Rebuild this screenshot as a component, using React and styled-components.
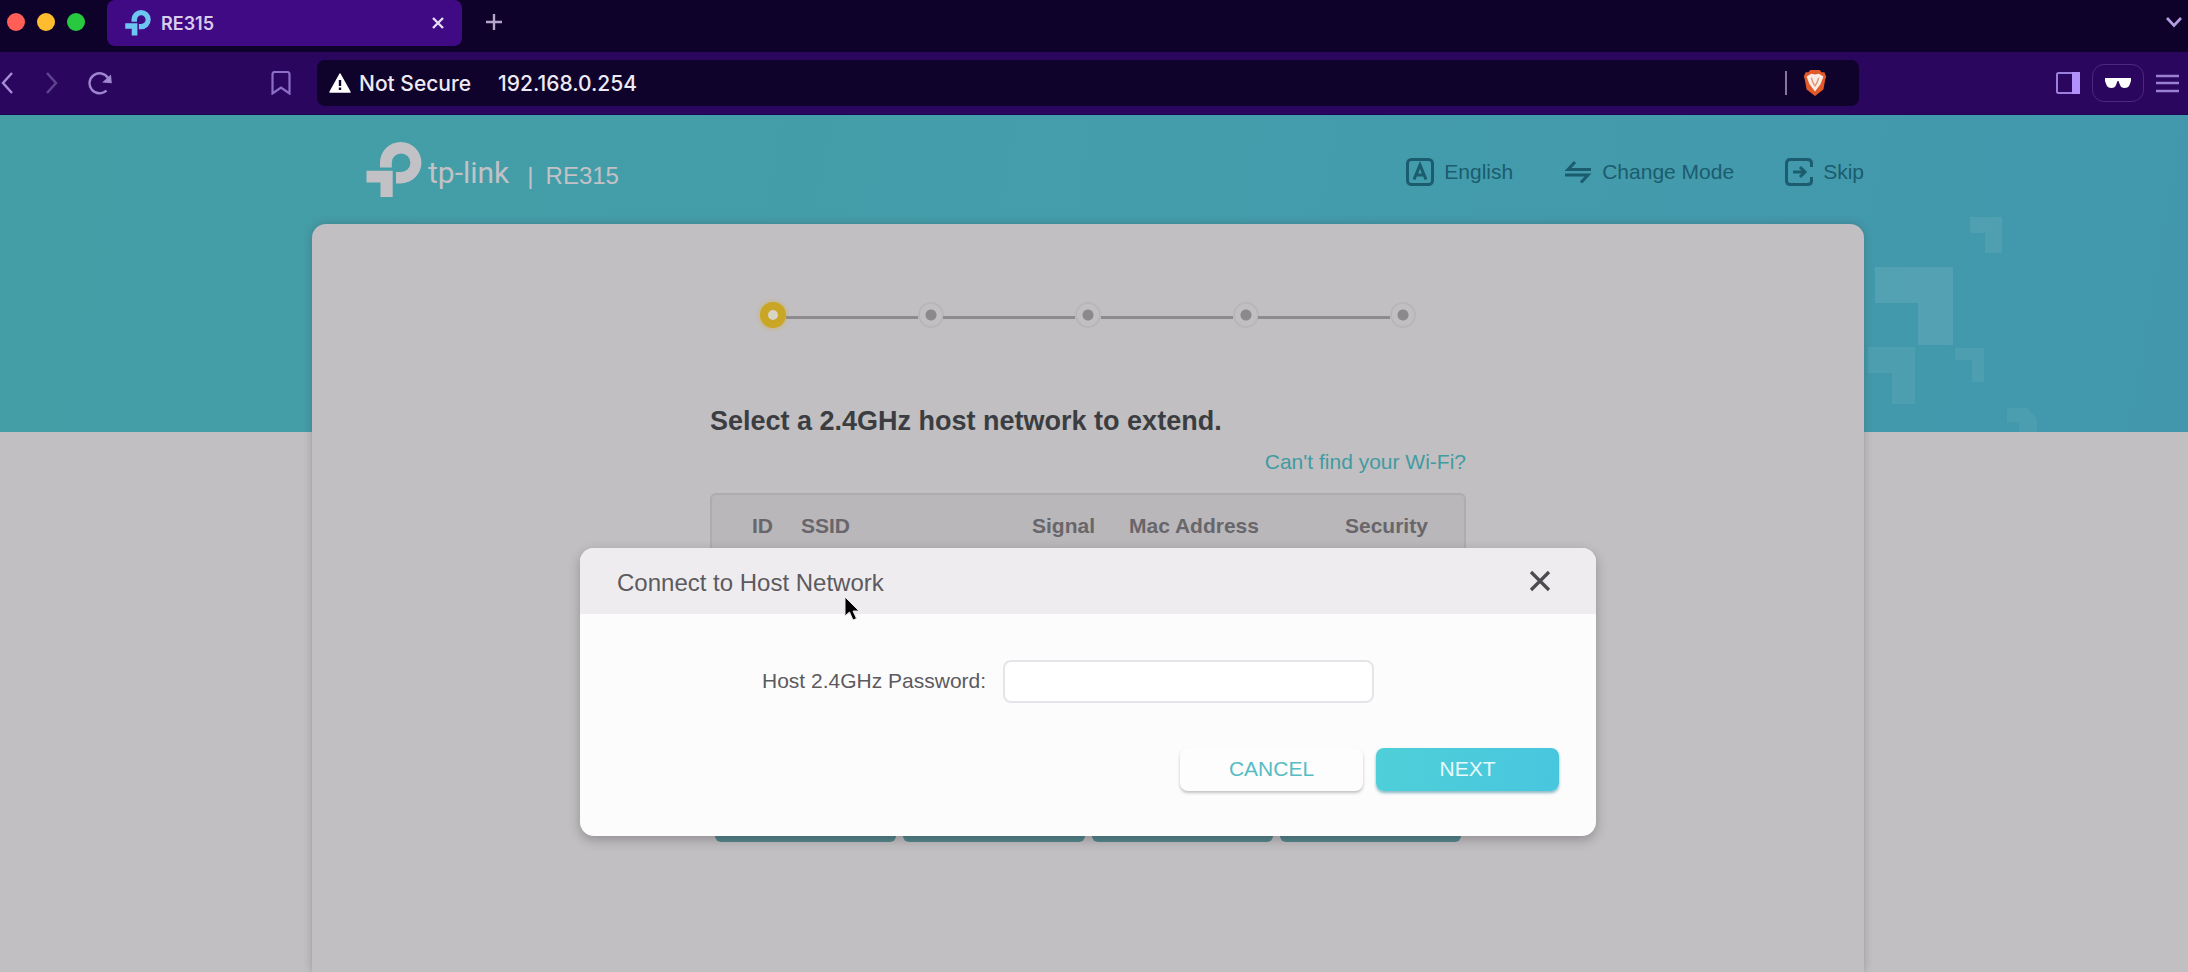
// lib
import styled, { createGlobalStyle } from "styled-components";

const steps = [1, 2, 3, 4, 5];
const actions = ["a", "b", "c", "d"];

function TpLogo({ size, color }) {
  return (
    <svg width={size} height={size} viewBox="0 0 56 56" fill={color}>
      <path d="M14 25.500V20.700A20.700 20.700 0 1 1 34.700 41.400H30V30H34.700A9.300 9.300 0 1 0 25.800 20.700V25.500Z" />
      <path d="M0.500 28.700H26.700V55H14.500V40.500H0.500Z" />
    </svg>
  );
}

function TabBar() {
  return (
    <Tabs>
      <Lights>
        <Light $color="#ff5f57" />
        <Light $color="#febc2e" />
        <Light $color="#28c840" />
      </Lights>
      <Tab>
        <TpLogo size={26} color="#6cc6f0" />
        <TabTitle>RE315</TabTitle>
        <IconButton aria-label="Close tab">
          <svg width="12" height="12" viewBox="0 0 12 12" stroke="#e6dcf5" strokeWidth="2.4">
            <path d="M1 1L11 11M11 1L1 11" />
          </svg>
        </IconButton>
      </Tab>
      <IconButton aria-label="New tab">
        <svg width="16" height="16" viewBox="0 0 16 16" stroke="#b3a6c9" strokeWidth="2.4">
          <path d="M8 0V16M0 8H16" />
        </svg>
      </IconButton>
      <Spacer />
      <IconButton aria-label="Search tabs">
        <svg width="16" height="12" viewBox="0 0 16 12" fill="none" stroke="#b69ce0" strokeWidth="2.6">
          <path d="M1 2L8 9.500L15 2" />
        </svg>
      </IconButton>
    </Tabs>
  );
}

function Toolbar() {
  return (
    <Bar>
      <BarSide>
        <IconButton aria-label="Back">
          <svg width="14" height="22" viewBox="0 0 14 22" fill="none" stroke="#a68fd6" strokeWidth="2.4">
            <path d="M12 1L3 11L12 21" />
          </svg>
        </IconButton>
        <IconButton aria-label="Forward">
          <svg width="14" height="22" viewBox="0 0 14 22" fill="none" stroke="#5f4590" strokeWidth="2.4">
            <path d="M3 1L12 11L3 21" />
          </svg>
        </IconButton>
        <IconButton aria-label="Reload">
          <svg width="24" height="24" viewBox="0 0 24 24" fill="none" stroke="#9d85cf" strokeWidth="2.4">
            <path d="M18.500 19.500A10 10 0 1 1 20 7" />
            <path d="M17 10.500L22.500 11L22 6Z" fill="#b49be4" />
          </svg>
        </IconButton>
      </BarSide>
      <IconButton aria-label="Bookmark">
        <svg width="20" height="24" viewBox="0 0 20 24" fill="none" stroke="#8b6fc6" strokeWidth="2.2">
          <path d="M4 1H16Q18.500 1 18.500 3.500V22.500L10 16.500L1.500 22.500V3.500Q1.500 1 4 1Z" />
        </svg>
      </IconButton>
      <AddressBar>
        <svg width="22" height="20" viewBox="0 0 22 20">
          <path d="M11 1L21 19H1Z" fill="#fff" stroke="#fff" strokeWidth="1.5" strokeLinejoin="round" />
          <path d="M11 7V13M11 14.500V17" stroke="#12032c" strokeWidth="2.4" />
        </svg>
        <BarText>Not Secure</BarText>
        <Url aria-label="Address" defaultValue="192.168.0.254" />
        <Divider />
        <IconButton aria-label="Shields">
          <svg width="26" height="28" viewBox="0 0 26 30">
            <path
              d="M8 1H18L20 3.500L23 3.500L25 8L24 11L22 22L13 29L4 22L2 11L1 8L3 3.500L6 3.500Z"
              fill="#e2592a"
            />
            <path d="M4 8L9 5L13 6L17 5L22 8L19 16L13 24L7 16Z" fill="#f9ece6" />
            <path d="M9 9.500L11 15L13 18L15 15L17 9.500" fill="none" stroke="#df9a78" strokeWidth="1.6" />
          </svg>
        </IconButton>
      </AddressBar>
      <Spacer />
      <BarTools>
        <IconButton aria-label="Sidebar">
          <svg width="24" height="22" viewBox="0 0 24 22">
            <rect x="1" y="1" width="22" height="20" rx="1.5" fill="none" stroke="#9a7fdc" strokeWidth="2" />
            <path d="M16 0H24V22H16Z" fill="#b290fa" />
          </svg>
        </IconButton>
        <PrivateButton aria-label="Private window">
          <svg width="26" height="10" viewBox="0 0 26 10" fill="#fff">
            <path d="M0 0H26V3L24.500 7Q23.500 10 19.500 10Q16 10 15 7L13.500 3H12.500L11 7Q10 10 6.500 10Q2.500 10 1.500 7L0 3Z" />
          </svg>
        </PrivateButton>
        <IconButton aria-label="Menu">
          <svg width="23" height="20" viewBox="0 0 23 20" stroke="#9a80d0" strokeWidth="2.4">
            <path d="M0 3H23M0 10H23M0 18H23" />
          </svg>
        </IconButton>
      </BarTools>
    </Bar>
  );
}

function Header() {
  return (
    <Head>
      <Brand>
        <TpLogo size={56} color="#c2c1c6" />
        <LogoText>tp-link</LogoText>
        <Model>|</Model>
        <Model>RE315</Model>
      </Brand>
      <Nav>
        <NavLink href="#">
          <svg width="28" height="28" viewBox="0 0 28 28" fill="none" stroke="currentColor" strokeWidth="3">
            <rect x="1.5" y="1.5" width="25" height="25" rx="4" />
            <path d="M8 21.500L14 7L20 21.500M10 17H18" />
          </svg>
          English
        </NavLink>
        <NavLink href="#">
          <svg width="28" height="24" viewBox="0 0 28 24" fill="none" stroke="currentColor" strokeWidth="3">
            <path d="M11 2L4 9.500H27M1 15H24L17 22.500" />
          </svg>
          Change Mode
        </NavLink>
        <NavLink href="#">
          <svg width="28" height="28" viewBox="0 0 28 28" fill="none" stroke="currentColor" strokeWidth="3">
            <path d="M26.500 9V5.500Q26.500 1.500 22.500 1.500H5.500Q1.500 1.500 1.500 5.500V22.500Q1.500 26.500 5.500 26.500H22.500Q26.500 26.500 26.500 22.500V19" />
            <path d="M8 14H20M15 9L20 14L15 19" />
          </svg>
          Skip
        </NavLink>
      </Nav>
    </Head>
  );
}

function ConnectDialog() {
  return (
    <Dialog role="dialog" aria-labelledby="dialog-title">
      <DialogHead>
        <DialogTitle id="dialog-title">Connect to Host Network</DialogTitle>
        <IconButton aria-label="Close">
          <svg width="22" height="22" viewBox="0 0 22 22" stroke="#4d4b50" strokeWidth="3.2">
            <path d="M2 2L20 20M20 2L2 20" />
          </svg>
        </IconButton>
      </DialogHead>
      <Field>
        <Label htmlFor="password">Host 2.4GHz Password:</Label>
        <PasswordInput id="password" type="password" />
      </Field>
      <DialogActions>
        <DialogBtn>CANCEL</DialogBtn>
        <DialogBtn $primary>NEXT</DialogBtn>
      </DialogActions>
      <Pointer width="18" height="26" viewBox="0 0 18 26">
        <path
          d="M1 1V20L5.500 16L9 24L12.500 22.500L9 15H15Z"
          fill="#000"
          stroke="#e8e6ea"
          strokeWidth="1"
        />
      </Pointer>
    </Dialog>
  );
}

export default function App() {
  return (
    <Window>
      <GlobalStyle />
      <TabBar />
      <Toolbar />
      <Page>
        <Squares width="180" height="220" viewBox="0 0 180 220" fill="#fff">
          <path d="M11 55H89V133H54V91H11Z" opacity=".09" />
          <path d="M106 5H138V41H121V21H106Z" opacity=".07" />
          <path d="M4 135H51V192H28V161H4Z" opacity=".06" />
          <path d="M91 136H120V170H108V148H91Z" opacity=".06" />
          <path d="M143 196H163L173 206V220H155V210H143Z" opacity=".05" />
        </Squares>
        <Header />
        <Card>
          <Steps>
            {steps.map((step) => (
              <Step key={step} $active={step === 1} />
            ))}
          </Steps>
          <Content>
            <Title>Select a 2.4GHz host network to extend.</Title>
            <HelpLink href="#">Can't find your Wi-Fi?</HelpLink>
            <TableBox>
              <Table>
                <thead>
                  <tr>
                    <Th $width="49px">ID</Th>
                    <Th $width="231px">SSID</Th>
                    <Th $width="97px">Signal</Th>
                    <Th $width="216px">Mac Address</Th>
                    <Th>Security</Th>
                  </tr>
                </thead>
              </Table>
            </TableBox>
            <PageActions>
              {actions.map((action) => (
                <PageBtn key={action} />
              ))}
            </PageActions>
          </Content>
        </Card>
        <Overlay>
          <ConnectDialog />
        </Overlay>
      </Page>
    </Window>
  );
}

const GlobalStyle = createGlobalStyle`
  * {
    box-sizing: border-box;
  }
  body {
    margin: 0;
    font-family: "Liberation Sans", Arial, sans-serif;
  }
  button {
    padding: 0;
    border: none;
    background: none;
    font-family: inherit;
    cursor: pointer;
  }
  svg {
    display: block;
    flex-shrink: 0;
  }
`;

const Window = styled.div`
  display: flex;
  flex-direction: column;
  height: 100vh;
  overflow: hidden;
`;

const IconButton = styled.button`
  display: flex;
  align-items: center;
  flex-shrink: 0;
`;

const Spacer = styled.div`
  flex: 1;
`;

const Tabs = styled.div`
  display: flex;
  align-items: flex-start;
  height: 52px;
  padding-right: 6px;
  background: #0e022a;

  & > button {
    height: 44px;
  }
`;

const Lights = styled.div`
  display: flex;
  align-items: center;
  gap: 12px;
  height: 44px;
  padding: 0 22px 0 7px;
`;

const Light = styled.span`
  width: 18px;
  height: 18px;
  border-radius: 50%;
  background: ${(props) => props.$color};
`;

const Tab = styled.div`
  display: flex;
  align-items: center;
  width: 355px;
  height: 46px;
  padding: 0 18px;
  margin-right: 24px;
  border-radius: 8px;
  background: #400a84;
`;

const TabTitle = styled.span`
  flex: 1;
  padding-left: 10px;
  font-family: Inter, sans-serif;
  font-size: 18px;
  font-weight: 600;
  color: #d9cdec;
`;

const Bar = styled.div`
  display: flex;
  align-items: center;
  height: 63px;
  padding-right: 9px;
  background: #2b065f;
  border-bottom: 1px solid #1c0754;
`;

const BarSide = styled.div`
  display: flex;
  align-items: center;
  gap: 30px;
  width: 271px;
`;

const AddressBar = styled.div`
  display: flex;
  align-items: center;
  flex: 0 1 1542px;
  height: 46px;
  padding: 0 31px 0 12px;
  margin-left: 26px;
  border-radius: 8px;
  background: #0f022b;
`;

const BarText = styled.span`
  padding: 0 27px 0 8px;
  font-family: Inter, sans-serif;
  font-size: 21px;
  font-weight: 500;
  color: #eeeaf5;
`;

const Url = styled.input`
  flex: 1;
  min-width: 0;
  padding: 0;
  border: none;
  outline: none;
  background: none;
  font-family: Inter, sans-serif;
  font-size: 21px;
  font-weight: 500;
  color: #eeeaf5;
`;

const Divider = styled.span`
  width: 2px;
  height: 24px;
  margin-right: 15px;
  background: #84769f;
`;

const BarTools = styled.div`
  display: flex;
  align-items: center;
  gap: 12px;
`;

const PrivateButton = styled.button`
  display: flex;
  align-items: center;
  justify-content: center;
  width: 52px;
  height: 38px;
  && {
    border: 1px solid #4a2a7c;
  }
  border-radius: 12px;
`;

const Page = styled.div`
  position: relative;
  display: flex;
  flex-direction: column;
  align-items: center;
  flex: 1;
  padding: 0 12px 0 0;
  background: linear-gradient(100deg, #449ea6, #439dab 55%, #4297ac) no-repeat top / 100% 317px #c1bfc2;
`;

const Squares = styled.svg`
  position: absolute;
  top: 97px;
  left: calc(50% + 770px);
`;

const Head = styled.header`
  display: flex;
  align-items: center;
  justify-content: space-between;
  width: 100%;
  max-width: 1552px;
  height: 109px;
  padding-left: 54px;
`;

const Brand = styled.div`
  display: flex;
  align-items: center;
  color: #c2c1c6;
`;

const LogoText = styled.span`
  padding: 6px 18px 0 6px;
  font-family: Roboto, sans-serif;
  font-size: 30px;
  line-height: 32px;
`;

const Model = styled.span`
  padding-top: 12px;
  margin-right: 12px;
  font-size: 24px;
  line-height: 24px;
`;

const Nav = styled.nav`
  display: flex;
  align-items: center;
  gap: 51px;
  padding-top: 4px;
`;

const NavLink = styled.a`
  display: flex;
  align-items: center;
  gap: 10px;
  font-size: 21px;
  color: #1b5c6e;
  text-decoration: none;
`;

const Card = styled.main`
  flex: 1;
  width: 100%;
  max-width: 1552px;
  padding-top: 78px;
  border-radius: 14px 14px 0 0;
  background: #c1bfc2;
  box-shadow: 0 0 8px rgba(60, 60, 70, 0.3);
`;

const Steps = styled.ol`
  display: flex;
  justify-content: space-between;
  width: 656px;
  padding: 0;
  margin: 0 auto;
  list-style: none;
`;

const Step = styled.li`
  position: relative;
  width: 26px;
  height: 26px;
  border: ${(props) => (props.$active ? "8px solid #c9a626" : "2px solid #b8b6b9")};
  border-radius: 50%;
  background: ${(props) =>
    props.$active ? "#d8d4c6" : "radial-gradient(circle, #8b898c 5px, transparent 6px)"};
  box-shadow: ${(props) => (props.$active ? "0 0 5px #cfb45a" : "none")};

  /* connector to the previous step */
  &:not(:first-child)::before {
    content: "";
    position: absolute;
    top: 12px;
    right: 24px;
    width: 132px;
    height: 3px;
    background: #8d8b8e;
  }
`;

const Content = styled.section`
  display: flex;
  flex-direction: column;
  width: 756px;
  margin: 78px auto 0;
`;

const Title = styled.h1`
  margin: 0;
  font-size: 27px;
  line-height: 30px;
  color: #3b3d41;
`;

const HelpLink = styled.a`
  align-self: flex-end;
  margin-top: 14px;
  font-size: 21px;
  line-height: 24px;
  color: #429ba0;
  text-decoration: none;
`;

const TableBox = styled.div`
  height: 290px;
  margin-top: 19px;
  padding-left: 40px;
  border: 2px solid #aeacaf;
  border-radius: 6px;
  background: #b9b7ba;
`;

const Table = styled.table`
  width: 100%;
  table-layout: fixed;
  border-collapse: collapse;
`;

const Th = styled.th`
  width: ${(props) => props.$width || "auto"};
  height: 62px;
  padding: 0;
  font-size: 21px;
  text-align: left;
  color: #68666a;
`;

const PageActions = styled.div`
  display: flex;
  gap: 7px;
  padding: 0 5px;
  margin-top: 16px;
`;

const PageBtn = styled.button`
  flex: 1;
  height: 43px;
  && {
    background: #57888f;
  }
  border-radius: 6px;
`;

const Overlay = styled.div`
  position: absolute;
  top: 433px;
  left: 0;
  right: 12px;
  display: flex;
  justify-content: center;
`;

const Dialog = styled.div`
  position: relative;
  width: 1016px;
  height: 288px;
  border-radius: 14px;
  background: #fcfcfc;
  box-shadow: 0 4px 12px rgba(0, 0, 0, 0.25);
`;

const DialogHead = styled.div`
  display: flex;
  align-items: center;
  justify-content: space-between;
  height: 66px;
  padding: 0 45px 0 37px;
  border-radius: 14px 14px 0 0;
  background: #eeecef;
`;

const DialogTitle = styled.h2`
  margin: 0;
  padding-top: 4px;
  font-size: 24px;
  font-weight: normal;
  color: #5c5a5e;
`;

const Field = styled.div`
  display: flex;
  align-items: center;
  gap: 17px;
  padding: 46px 0 0 182px;
`;

const Label = styled.label`
  padding-bottom: 2px;
  font-size: 21px;
  color: #5c5a5e;
`;

const PasswordInput = styled.input`
  width: 371px;
  height: 43px;
  padding: 0 12px;
  border: 2px solid #e6e4e9;
  border-radius: 8px;
  outline: none;
  background: #fff;
  font-size: 21px;
`;

const DialogActions = styled.div`
  display: flex;
  justify-content: flex-end;
  gap: 13px;
  padding: 45px 37px 0 0;
`;

const DialogBtn = styled.button`
  width: 183px;
  height: 43px;
  && {
    padding-bottom: 2px;
    background: ${(props) =>
      props.$primary ? "linear-gradient(100deg, #4fcfd8, #48c6df)" : "#fdfdfd"};
  }
  border-radius: 8px;
  box-shadow: 0 2px 3px
    ${(props) => (props.$primary ? "rgba(60, 140, 155, 0.6)" : "rgba(90, 80, 95, 0.35)")};
  font-size: 21px;
  color: ${(props) => (props.$primary ? "#e6fafc" : "#56bcc3")};
`;

const Pointer = styled.svg`
  position: absolute;
  top: 48px;
  left: 264px;
`;
